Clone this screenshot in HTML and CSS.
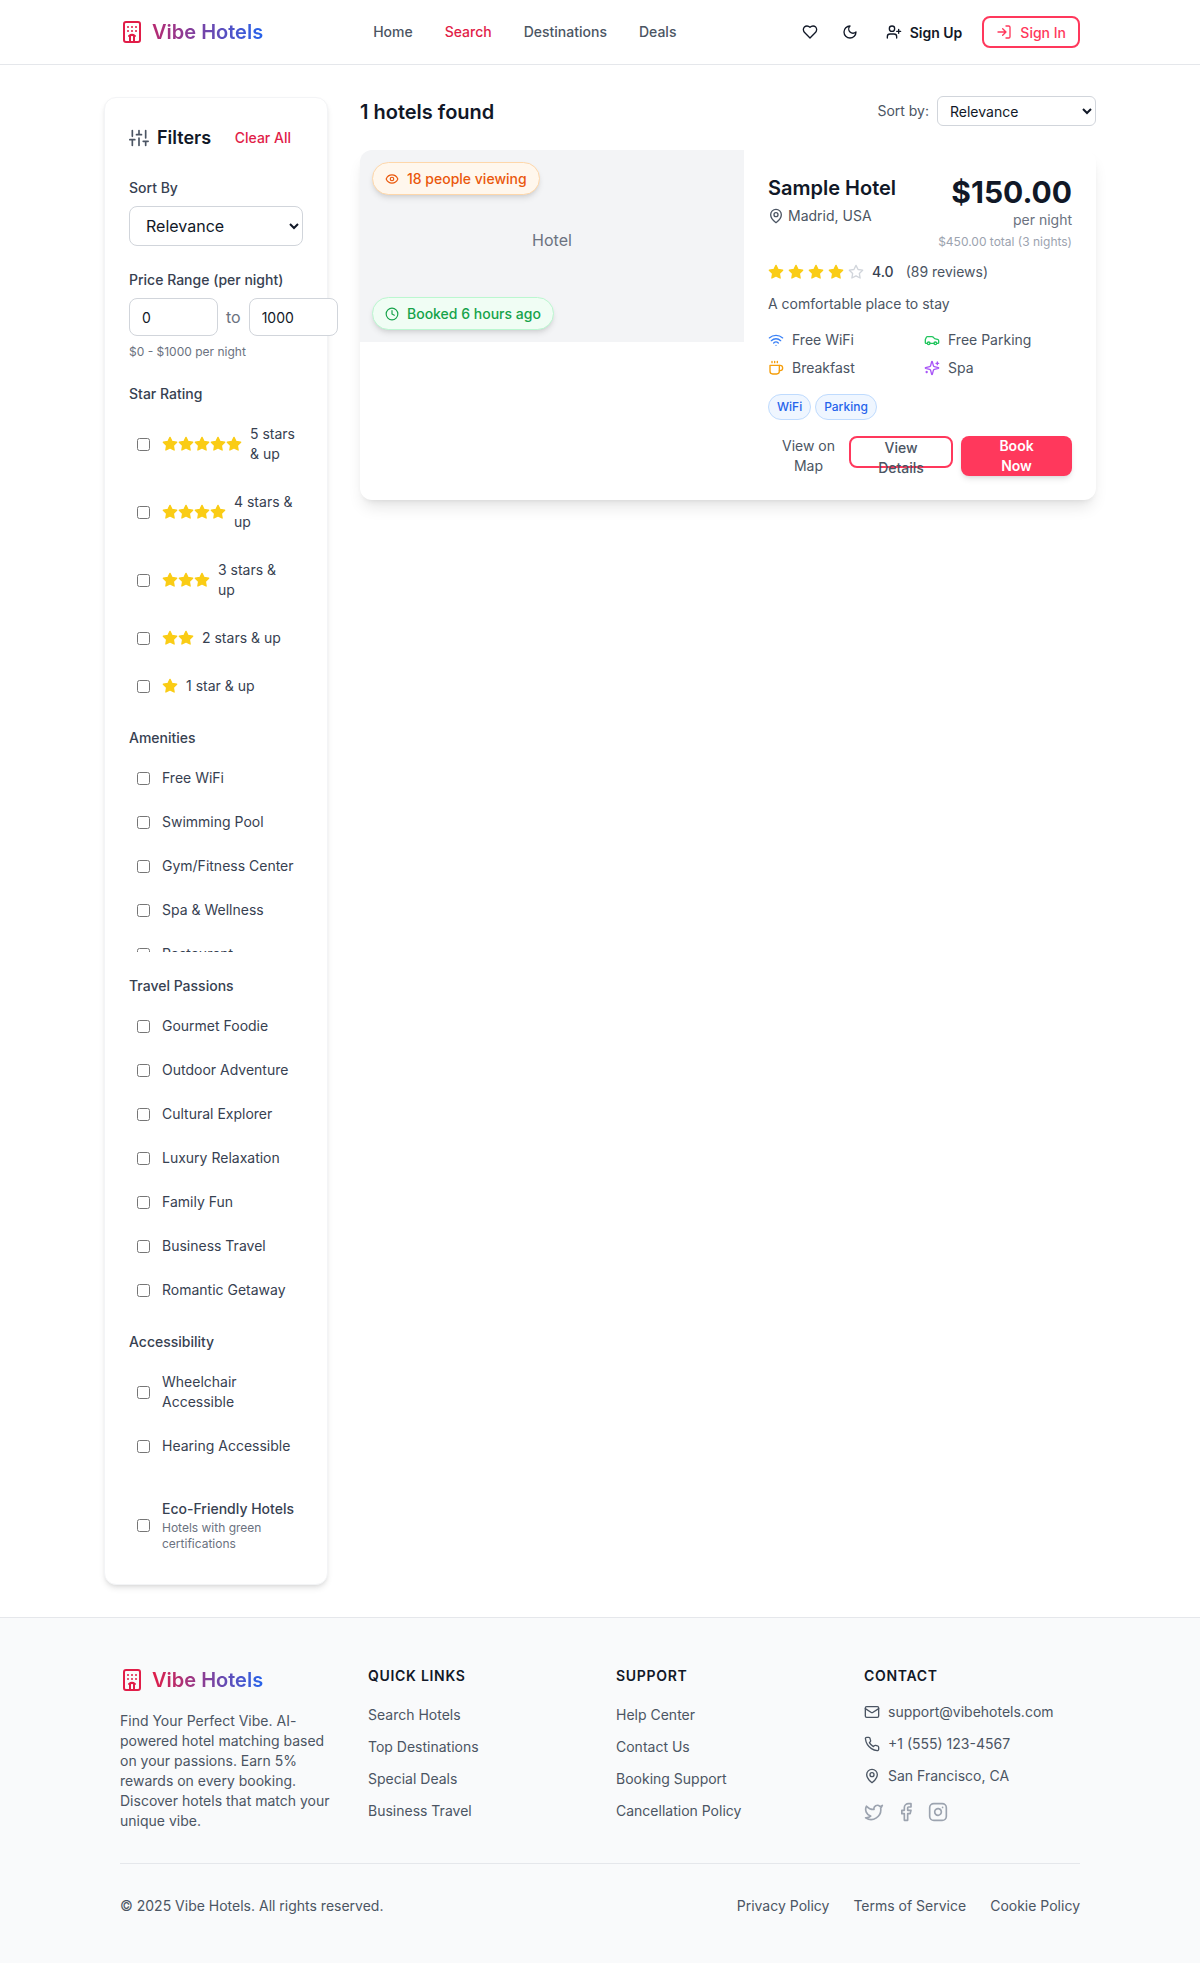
FILE: index.html
```html
<!DOCTYPE html>
<html lang="en">
<head>
<meta charset="utf-8">
<title>Vibe Hotels</title>
<link rel="stylesheet" href="styles.css">
</head>
<body>
<svg class="sprite" xmlns="http://www.w3.org/2000/svg">
<symbol id="i-hotel" viewBox="0 0 24 24"><path d="M10 22v-6.57M12 11h.01M12 7h.01M14 15.43V22M15 16a5 5 0 0 0-6 0M16 11h.01M16 7h.01M8 11h.01M8 7h.01"/><rect x="4" y="2" width="16" height="20" rx="2"/></symbol>
<symbol id="i-heart" viewBox="0 0 24 24"><path d="M19 14c1.49-1.46 3-3.21 3-5.5A5.5 5.5 0 0 0 16.5 3c-1.76 0-3 .5-4.5 2-1.5-1.5-2.74-2-4.5-2A5.5 5.5 0 0 0 2 8.5c0 2.3 1.5 4.05 3 5.5l7 7Z"/></symbol>
<symbol id="i-moon" viewBox="0 0 24 24"><path d="M12 3a6 6 0 0 0 9 9 9 9 0 1 1-9-9Z"/></symbol>
<symbol id="i-userplus" viewBox="0 0 24 24"><path d="M16 21v-2a4 4 0 0 0-4-4H6a4 4 0 0 0-4 4v2"/><circle cx="9" cy="7" r="4"/><path d="M19 8v6M22 11h-6"/></symbol>
<symbol id="i-login" viewBox="0 0 24 24"><path d="M15 3h4a2 2 0 0 1 2 2v14a2 2 0 0 1-2 2h-4"/><path d="m10 17 5-5-5-5M15 12H3"/></symbol>
<symbol id="i-sliders" viewBox="0 0 24 24"><path d="M4 21v-7M4 10V3M12 21v-9M12 8V3M20 21v-5M20 12V3M1 14h6M9 8h6M17 16h6"/></symbol>
<symbol id="i-star" viewBox="0 0 24 24"><polygon points="12 2 15.09 8.26 22 9.27 17 14.14 18.18 21.02 12 17.77 5.82 21.02 7 14.14 2 9.27 8.91 8.26 12 2"/></symbol>
<symbol id="i-pin" viewBox="0 0 24 24"><path d="M20 10c0 6-8 12-8 12s-8-6-8-12a8 8 0 0 1 16 0Z"/><circle cx="12" cy="10" r="3"/></symbol>
<symbol id="i-eye" viewBox="0 0 24 24"><path d="M2 12s3-7 10-7 10 7 10 7-3 7-10 7-10-7-10-7Z"/><circle cx="12" cy="12" r="3"/></symbol>
<symbol id="i-clock" viewBox="0 0 24 24"><circle cx="12" cy="12" r="10"/><path d="M12 6v6l4 2"/></symbol>
<symbol id="i-wifi" viewBox="0 0 24 24"><path d="M5 13a10 10 0 0 1 14 0M8.5 16.5a5 5 0 0 1 7 0M2 8.82a15 15 0 0 1 20 0M12 20h.01"/></symbol>
<symbol id="i-car" viewBox="0 0 24 24"><path d="M19 17h2c.6 0 1-.4 1-1v-3c0-.9-.7-1.7-1.5-1.9C18.7 10.6 16 10 16 10s-1.3-1.4-2.2-2.3c-.5-.4-1.1-.7-1.8-.7H5c-.6 0-1.1.4-1.4.9l-1.4 2.9A3.7 3.7 0 0 0 2 12v4c0 .6.4 1 1 1h2"/><circle cx="7" cy="17" r="2"/><path d="M9 17h6"/><circle cx="17" cy="17" r="2"/></symbol>
<symbol id="i-coffee" viewBox="0 0 24 24"><path d="M17 8h1a4 4 0 1 1 0 8h-1"/><path d="M3 8h14v9a4 4 0 0 1-4 4H7a4 4 0 0 1-4-4Z"/><path d="M6 2v2M10 2v2M14 2v2"/></symbol>
<symbol id="i-sparkles" viewBox="0 0 24 24"><path d="M9.937 15.5A2 2 0 0 0 8.5 14.063l-6.135-1.582a.5.5 0 0 1 0-.962L8.5 9.936A2 2 0 0 0 9.937 8.5l1.582-6.135a.5.5 0 0 1 .963 0L14.063 8.5A2 2 0 0 0 15.5 9.937l6.135 1.581a.5.5 0 0 1 0 .964L15.5 14.063a2 2 0 0 0-1.437 1.437l-1.582 6.135a.5.5 0 0 1-.963 0z"/><path d="M20 3v4M22 5h-4M4 17v2M5 18H3"/></symbol>
<symbol id="i-mail" viewBox="0 0 24 24"><rect x="2" y="4" width="20" height="16" rx="2"/><path d="m22 7-8.97 5.7a1.94 1.94 0 0 1-2.06 0L2 7"/></symbol>
<symbol id="i-phone" viewBox="0 0 24 24"><path d="M22 16.92v3a2 2 0 0 1-2.18 2 19.79 19.79 0 0 1-8.63-3.07 19.5 19.5 0 0 1-6-6 19.79 19.79 0 0 1-3.07-8.67A2 2 0 0 1 4.11 2h3a2 2 0 0 1 2 1.72 12.84 12.84 0 0 0 .7 2.81 2 2 0 0 1-.45 2.11L8.09 9.91a16 16 0 0 0 6 6l1.27-1.27a2 2 0 0 1 2.11-.45 12.84 12.84 0 0 0 2.81.7A2 2 0 0 1 22 16.92z"/></symbol>
<symbol id="i-twitter" viewBox="0 0 24 24"><path d="M22 4s-.7 2.1-2 3.4c1.6 10-9.4 17.3-18 11.6 2.2.1 4.4-.6 6-2C3 15.5.5 9.6 3 5c2.2 2.6 5.6 4.1 9 4-.9-4.2 4-6.6 7-3.8 1.1 0 3-1.2 3-1.2z"/></symbol>
<symbol id="i-facebook" viewBox="0 0 24 24"><path d="M18 2h-3a5 5 0 0 0-5 5v3H7v4h3v8h4v-8h3l1-4h-4V7a1 1 0 0 1 1-1h3z"/></symbol>
<symbol id="i-instagram" viewBox="0 0 24 24"><rect x="2" y="2" width="20" height="20" rx="5"/><path d="M16 11.37A4 4 0 1 1 12.63 8 4 4 0 0 1 16 11.37zM17.5 6.5h.01"/></symbol>
</svg>

<header class="site-header">
  <div class="header-inner">
    <a class="logo" href="#">
      <svg class="ic ic-24 rose"><use href="#i-hotel"/></svg>
      <span class="logo-text logo-text-header">Vibe Hotels</span>
    </a>
    <nav class="main-nav">
      <a href="#">Home</a>
      <a href="#" class="active">Search</a>
      <a href="#">Destinations</a>
      <a href="#">Deals</a>
    </nav>
    <div class="header-actions">
      <button class="icon-btn"><svg class="ic ic-16"><use href="#i-heart"/></svg></button>
      <button class="icon-btn"><svg class="ic ic-16"><use href="#i-moon"/></svg></button>
      <button class="signup"><svg class="ic ic-16"><use href="#i-userplus"/></svg>Sign Up</button>
      <button class="signin"><svg class="ic ic-16"><use href="#i-login"/></svg>Sign In</button>
    </div>
  </div>
</header>

<main class="page">
  <aside class="filters">
    <div class="filters-head">
      <div class="filters-title"><svg class="ic ic-20 slate"><use href="#i-sliders"/></svg><h2>Filters</h2></div>
      <a class="clear" href="#">Clear All</a>
    </div>

    <section class="fgroup">
      <label class="flabel tight">Sort By</label>
      <select class="sel-big"><option>Relevance</option></select>
    </section>

    <section class="fgroup">
      <label class="flabel tight">Price Range (per night)</label>
      <div class="price-row">
        <input class="price" type="text" value="0">
        <span class="to">to</span>
        <input class="price" type="text" value="1000">
      </div>
      <p class="hint">$0 - $1000 per night</p>
    </section>

    <section class="fgroup">
      <label class="flabel">Star Rating</label>
      <div class="opts opts-stars">
        <label class="opt"><input type="checkbox"><span class="stars"><svg class="ic ic-16 star"><use href="#i-star"/></svg><svg class="ic ic-16 star"><use href="#i-star"/></svg><svg class="ic ic-16 star"><use href="#i-star"/></svg><svg class="ic ic-16 star"><use href="#i-star"/></svg><svg class="ic ic-16 star"><use href="#i-star"/></svg></span><span>5 stars &amp; up</span></label>
        <label class="opt"><input type="checkbox"><span class="stars"><svg class="ic ic-16 star"><use href="#i-star"/></svg><svg class="ic ic-16 star"><use href="#i-star"/></svg><svg class="ic ic-16 star"><use href="#i-star"/></svg><svg class="ic ic-16 star"><use href="#i-star"/></svg></span><span>4 stars &amp; up</span></label>
        <label class="opt"><input type="checkbox"><span class="stars"><svg class="ic ic-16 star"><use href="#i-star"/></svg><svg class="ic ic-16 star"><use href="#i-star"/></svg><svg class="ic ic-16 star"><use href="#i-star"/></svg></span><span>3 stars &amp; up</span></label>
        <label class="opt"><input type="checkbox"><span class="stars"><svg class="ic ic-16 star"><use href="#i-star"/></svg><svg class="ic ic-16 star"><use href="#i-star"/></svg></span><span>2 stars &amp; up</span></label>
        <label class="opt"><input type="checkbox"><span class="stars"><svg class="ic ic-16 star"><use href="#i-star"/></svg></span><span>1 star &amp; up</span></label>
      </div>
    </section>

    <section class="fgroup">
      <label class="flabel">Amenities</label>
      <div class="opts opts-scroll">
        <label class="opt"><input type="checkbox"><span>Free WiFi</span></label>
        <label class="opt"><input type="checkbox"><span>Swimming Pool</span></label>
        <label class="opt"><input type="checkbox"><span>Gym/Fitness Center</span></label>
        <label class="opt"><input type="checkbox"><span>Spa &amp; Wellness</span></label>
        <label class="opt"><input type="checkbox"><span>Restaurant</span></label>
      </div>
    </section>

    <section class="fgroup">
      <label class="flabel">Travel Passions</label>
      <div class="opts">
        <label class="opt"><input type="checkbox"><span>Gourmet Foodie</span></label>
        <label class="opt"><input type="checkbox"><span>Outdoor Adventure</span></label>
        <label class="opt"><input type="checkbox"><span>Cultural Explorer</span></label>
        <label class="opt"><input type="checkbox"><span>Luxury Relaxation</span></label>
        <label class="opt"><input type="checkbox"><span>Family Fun</span></label>
        <label class="opt"><input type="checkbox"><span>Business Travel</span></label>
        <label class="opt"><input type="checkbox"><span>Romantic Getaway</span></label>
      </div>
    </section>

    <section class="fgroup">
      <label class="flabel">Accessibility</label>
      <div class="opts">
        <label class="opt"><input type="checkbox"><span>Wheelchair Accessible</span></label>
        <label class="opt"><input type="checkbox"><span>Hearing Accessible</span></label>
      </div>
    </section>

    <section class="fgroup eco-group">
      <label class="opt"><input type="checkbox"><span class="eco"><span class="eco-title">Eco-Friendly Hotels</span><span class="eco-sub">Hotels with green certifications</span></span></label>
    </section>
  </aside>

  <div class="results">
    <div class="results-head">
      <h1>1 hotels found</h1>
      <div class="sort"><span>Sort by:</span><select class="sel-small"><option>Relevance</option></select></div>
    </div>

    <article class="card">
      <div class="card-img">
        <span class="placeholder">Hotel</span>
        <span class="pill pill-orange pill-top"><svg class="ic ic-14"><use href="#i-eye"/></svg>18 people viewing</span>
        <span class="pill pill-green pill-bottom"><svg class="ic ic-14"><use href="#i-clock"/></svg>Booked 6 hours ago</span>
      </div>
      <div class="card-body">
        <div class="card-top">
          <div>
            <h3 class="hotel-name">Sample Hotel</h3>
            <div class="hotel-loc"><svg class="ic ic-16"><use href="#i-pin"/></svg>Madrid, USA</div>
          </div>
          <div class="price-box">
            <div class="price-main">$150.00</div>
            <div class="price-night">per night</div>
            <div class="price-total">$450.00 total (3 nights)</div>
          </div>
        </div>
        <div class="rating">
          <span class="rating-stars"><svg class="ic ic-16 star"><use href="#i-star"/></svg><svg class="ic ic-16 star"><use href="#i-star"/></svg><svg class="ic ic-16 star"><use href="#i-star"/></svg><svg class="ic ic-16 star"><use href="#i-star"/></svg><svg class="ic ic-16 star-empty"><use href="#i-star"/></svg></span>
          <span class="rating-num">4.0</span>
          <span class="rating-count">(89 reviews)</span>
        </div>
        <p class="desc">A comfortable place to stay</p>
        <div class="amen-grid">
          <div class="amen"><svg class="ic ic-16 c-blue"><use href="#i-wifi"/></svg>Free WiFi</div>
          <div class="amen"><svg class="ic ic-16 c-green"><use href="#i-car"/></svg>Free Parking</div>
          <div class="amen"><svg class="ic ic-16 c-amber"><use href="#i-coffee"/></svg>Breakfast</div>
          <div class="amen"><svg class="ic ic-16 c-purple"><use href="#i-sparkles"/></svg>Spa</div>
        </div>
        <div class="tags"><span class="tag">WiFi</span><span class="tag">Parking</span></div>
        <div class="actions">
          <button class="btn-map">View on Map</button>
          <button class="btn-details">View Details</button>
          <button class="btn-book">Book Now</button>
        </div>
      </div>
    </article>
  </div>
</main>

<footer class="site-footer">
  <div class="footer-inner">
    <div class="footer-grid">
      <div>
        <a class="logo" href="#">
          <svg class="ic ic-24 rose"><use href="#i-hotel"/></svg>
          <span class="logo-text">Vibe Hotels</span>
        </a>
        <p class="about">Find Your Perfect Vibe. AI-powered hotel matching based on your passions. Earn 5% rewards on every booking. Discover hotels that match your unique vibe.</p>
      </div>
      <div>
        <h4>Quick Links</h4>
        <ul>
          <li><a href="#">Search Hotels</a></li>
          <li><a href="#">Top Destinations</a></li>
          <li><a href="#">Special Deals</a></li>
          <li><a href="#">Business Travel</a></li>
        </ul>
      </div>
      <div>
        <h4>Support</h4>
        <ul>
          <li><a href="#">Help Center</a></li>
          <li><a href="#">Contact Us</a></li>
          <li><a href="#">Booking Support</a></li>
          <li><a href="#">Cancellation Policy</a></li>
        </ul>
      </div>
      <div>
        <h4>Contact</h4>
        <div class="contact">
          <div class="contact-row"><svg class="ic ic-16"><use href="#i-mail"/></svg>support@vibehotels.com</div>
          <div class="contact-row"><svg class="ic ic-16"><use href="#i-phone"/></svg>+1 (555) 123-4567</div>
          <div class="contact-row"><svg class="ic ic-16"><use href="#i-pin"/></svg>San Francisco, CA</div>
        </div>
        <div class="social">
          <svg class="ic ic-20"><use href="#i-twitter"/></svg>
          <svg class="ic ic-20"><use href="#i-facebook"/></svg>
          <svg class="ic ic-20"><use href="#i-instagram"/></svg>
        </div>
      </div>
    </div>
    <div class="footer-bottom">
      <span>© 2025 Vibe Hotels. All rights reserved.</span>
      <div class="legal"><a href="#">Privacy Policy</a><a href="#">Terms of Service</a><a href="#">Cookie Policy</a></div>
    </div>
  </div>
</footer>
</body>
</html>
```
FILE: styles.css
```css
* { box-sizing: border-box; }
html, body { margin: 0; padding: 0; }
body { font-family: Inter, "Liberation Sans", sans-serif; font-size: 14px; line-height: 20px; color: #111827; background: #fff; -webkit-font-smoothing: antialiased; }
a { color: inherit; text-decoration: none; }
h1, h2, h3, h4, p, ul { margin: 0; padding: 0; }
ul { list-style: none; }
button { font-family: inherit; background: none; border: 0; cursor: pointer; padding: 0; }
.sprite { display: none; }

.ic { fill: none; stroke: currentColor; stroke-width: 2; stroke-linecap: round; stroke-linejoin: round; flex-shrink: 0; display: block; }
.ic-14 { width: 14px; height: 14px; }
.ic-16 { width: 16px; height: 16px; }
.ic-20 { width: 20px; height: 20px; }
.ic-24 { width: 24px; height: 24px; }
.rose { color: #e11d48; }
.slate { color: #4b5563; }
.star { color: #facc15; fill: #facc15; }
.star-empty { color: #d1d5db; }
.c-blue { color: #3b82f6; }
.c-green { color: #22c55e; }
.c-amber { color: #f59e0b; }
.c-purple { color: #a855f7; }

/* Header */
.site-header { background: #fff; border-bottom: 1px solid #e5e7eb; height: 65px; }
.header-inner { width: 960px; height: 64px; margin: 0 auto; display: flex; align-items: center; }
.logo { display: flex; align-items: center; gap: 8px; }
.logo-text { font-size: 20px; line-height: 28px; font-weight: 600; color: transparent; background: linear-gradient(90deg, #e11d48, #2563eb); -webkit-background-clip: text; background-clip: text; }
.logo-text-header { background-image: linear-gradient(90deg, #b82a70, #2563eb); }
.main-nav { display: flex; gap: 32px; margin-left: 110px; font-weight: 500; color: #4b5563; }
.main-nav .active { color: #e11d48; }
.header-actions { margin-left: auto; display: flex; align-items: center; gap: 4px; }
.icon-btn { width: 36px; height: 36px; display: flex; align-items: center; justify-content: center; color: #111827; }
.signup { display: flex; align-items: center; gap: 8px; padding: 0 12px 0 14px; height: 36px; font-size: 14px; font-weight: 600; color: #111827; margin-right: 4px; }
.signin { display: flex; align-items: center; gap: 8px; padding: 0 12px; height: 32px; border: 2px solid #ff385c; border-radius: 8px; font-size: 14px; font-weight: 500; color: #ff385c; }

/* Layout */
.page { width: 992px; margin: 0 auto; padding: 32px 0; display: flex; align-items: flex-start; gap: 32px; }

/* Filters */
.filters { width: 224px; flex-shrink: 0; background: #fff; border: 1px solid #f3f4f6; border-radius: 12px; box-shadow: 0 4px 6px -1px rgba(0,0,0,.1), 0 2px 4px -2px rgba(0,0,0,.1); padding: 24px; }
.filters-head { display: flex; align-items: center; justify-content: space-between; height: 32px; margin-bottom: 24px; }
.filters-title { display: flex; align-items: center; gap: 8px; }
.filters-title h2 { font-size: 18px; line-height: 28px; font-weight: 600; color: #111827; }
.clear { font-weight: 500; color: #e11d48; padding-right: 12px; }
.fgroup { margin-bottom: 24px; }
.fgroup:last-child { margin-bottom: 0; }
.flabel { display: block; font-weight: 500; color: #374151; margin-bottom: 12px; }
.flabel.tight { margin-bottom: 8px; }
.sel-big { display: block; width: 100%; height: 40px; padding: 0 12px; font-family: inherit; font-size: 16px; color: #111827; background: #fff; border: 1px solid #d1d5db; border-radius: 8px; }
.price-row { display: flex; align-items: center; gap: 8px; width: 209px; }
.price { width: 89px; height: 38px; padding: 8px 12px; font-family: inherit; font-size: 14px; color: #111827; background: #fff; border: 1px solid #d1d5db; border-radius: 8px; flex-shrink: 0; }
.to { font-size: 16px; color: #6b7280; }
.hint { margin-top: 8px; font-size: 12px; line-height: 16px; color: #6b7280; }
.opts { display: flex; flex-direction: column; gap: 8px; }
.opts-stars { gap: 12px; }
.opts-scroll { height: 192px; overflow: hidden; }
.opt { display: flex; align-items: center; gap: 12px; padding: 8px; color: #374151; flex-shrink: 0; }
.opt input { width: 13px; height: 13px; margin: 0; flex-shrink: 0; }
.stars { display: flex; flex-shrink: 0; margin-right: -4px; }
.eco-group { margin-top: 27px; }
.eco { display: flex; flex-direction: column; }
.eco-title { font-weight: 500; margin-bottom: 1px; }
.eco-sub { font-size: 12px; line-height: 16px; color: #6b7280; }

/* Results */
.results { flex: 1; min-width: 0; }
.results-head { display: flex; align-items: center; justify-content: space-between; height: 30px; margin-bottom: 24px; margin-top: -1px; }
.results-head h1 { font-size: 20px; line-height: 28px; font-weight: 600; color: #111827; margin-top: 2px; }
.sort { display: flex; align-items: center; gap: 8px; color: #4b5563; }
.sel-small { width: 159px; height: 30px; padding: 0 8px; font-family: inherit; font-size: 14px; color: #111827; background: #fff; border: 1px solid #d1d5db; border-radius: 6px; }

.card { display: flex; align-items: flex-start; background: #fff; border-radius: 12px; box-shadow: 0 10px 15px -3px rgba(0,0,0,.1), 0 4px 6px -4px rgba(0,0,0,.1); height: 350px; }
.card-img { position: relative; width: 384px; height: 192px; flex-shrink: 0; padding-bottom: 12px; background: #f3f4f6; border-top-left-radius: 12px; display: flex; align-items: center; justify-content: center; }
.placeholder { font-size: 16px; line-height: 24px; color: #6b7280; }
.pill { position: absolute; left: 12px; display: flex; align-items: center; gap: 8px; height: 33px; padding: 0 12px; border-radius: 999px; border: 1px solid; font-weight: 500; box-shadow: 0 4px 6px -1px rgba(0,0,0,.1), 0 2px 4px -2px rgba(0,0,0,.1); white-space: nowrap; }
.pill-top { top: 12px; }
.pill-bottom { bottom: 12px; }
.pill-orange { color: #ea580c; background: #fff7ed; border-color: #fed7aa; }
.pill-green { color: #16a34a; background: #f0fdf4; border-color: #bbf7d0; }

.card-body { flex: 1; min-width: 0; padding: 24px; }
.card-top { display: flex; justify-content: space-between; align-items: flex-start; }
.hotel-name { font-size: 20px; line-height: 28px; font-weight: 600; color: #111827; }
.hotel-loc { display: flex; align-items: center; gap: 4px; color: #4b5563; margin-top: 4px; }
.price-box { text-align: right; }
.price-main { font-size: 30px; line-height: 36px; font-weight: 700; color: #111827; }
.price-night { color: #6b7280; }
.price-total { font-size: 12px; line-height: 16px; color: #9ca3af; margin-top: 4px; }
.rating { display: flex; align-items: center; margin-top: 12px; height: 20px; }
.rating-stars { display: flex; gap: 4px; margin-right: 8px; }
.rating-num { font-weight: 500; color: #374151; margin-right: 12px; }
.rating-count { color: #4b5563; }
.desc { margin-top: 12px; color: #4b5563; }
.amen-grid { display: grid; grid-template-columns: 1fr 1fr; gap: 8px; margin-top: 16px; }
.amen { display: flex; align-items: center; gap: 8px; color: #4b5563; }
.tags { display: flex; gap: 4px; margin-top: 16px; }
.tag { height: 26px; padding: 0 8px; display: flex; align-items: center; border: 1px solid #bfdbfe; border-radius: 999px; background: #eff6ff; color: #2563eb; font-size: 12px; font-weight: 500; }
.actions { display: flex; justify-content: flex-end; align-items: flex-start; gap: 8px; margin-top: 16px; }
.actions button { font-size: 14px; line-height: 20px; text-align: center; }
.btn-map { width: 65px; color: #4b5563; }
.btn-details { width: 104px; height: 32px; padding: 0 16px; border: 2px solid #ff385c; border-radius: 8px; color: #4b5563; font-weight: 500; }
.btn-book { width: 111px; height: 40px; padding: 0 28px; border-radius: 8px; background: #ff385c; color: #fff; font-weight: 600; box-shadow: 0 4px 6px -1px rgba(0,0,0,.1), 0 2px 4px -2px rgba(0,0,0,.1); }

/* Footer */
.site-footer { background: #f9fafb; border-top: 1px solid #e5e7eb; padding: 48px 0; }
.footer-inner { width: 960px; margin: 0 auto; }
.footer-grid { display: grid; grid-template-columns: repeat(4, 216px); gap: 32px; }
.about { margin-top: 17px; color: #4b5563; }
.site-footer h4 { font-size: 14px; line-height: 20px; font-weight: 600; letter-spacing: .05em; text-transform: uppercase; color: #111827; margin-bottom: 17px; }
.site-footer ul { display: flex; flex-direction: column; gap: 12px; margin-top: 19px; color: #4b5563; }
.contact { display: flex; flex-direction: column; gap: 12px; color: #4b5563; margin-top: -1px; }
.contact-row { display: flex; align-items: center; gap: 8px; }
.social { display: flex; gap: 12px; margin-top: 16px; color: #9ca3af; }
.footer-bottom { display: flex; justify-content: space-between; margin-top: 32px; padding-top: 32px; border-top: 1px solid #e5e7eb; color: #4b5563; }
.legal { display: flex; gap: 24px; }
```
